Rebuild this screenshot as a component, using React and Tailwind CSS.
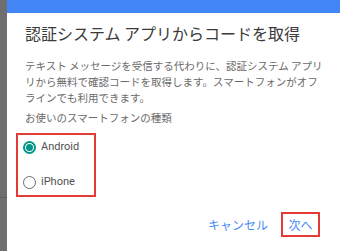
import React from "react";

const jp = { fontFamily: '"Noto Sans CJK JP", "Noto Sans", sans-serif' };

export default function App() {
  return (
    <div className="flex w-[340px] h-[251px] overflow-hidden bg-white" style={jp}>
      <div className="w-[7px] shrink-0 bg-[#6f6f6f] flex flex-col">
        <div className="h-[197px]" />
        <div className="h-px bg-[#5e5e5e]" />
      </div>
      <div className="flex-1 flex flex-col min-w-0">
        <div className="h-[13px] bg-[#4285f4] shrink-0" />
        <div className="flex flex-col pl-[18px] pr-[20px] pt-[10px]">
          <h1 className="text-[16px] leading-[20px] text-[#3a3a3a] whitespace-nowrap font-normal">
            認証システム アプリからコードを取得
          </h1>
          <p className="mt-[15px] text-[10.5px] leading-[16px] text-[#6a6a6a] whitespace-nowrap">
            テキスト メッセージを受信する代わりに、認証システム アプリ
            <br />
            リから無料で確認コードを取得します。スマートフォンがオフ
            <br />
            ラインでも利用できます。
          </p>
          <p className="mt-[4px] text-[10.5px] leading-[16px] text-[#6a6a6a] whitespace-nowrap">
            お使いのスマートフォンの種類
          </p>
          <div className="mt-[7px] -ml-[9px] w-[80px] h-[64px] border-2 border-[#e53935] flex flex-col pl-[5px]">
            <div className="flex items-center gap-[5px] mt-[6px] h-[13px]">
              <span className="w-[13px] h-[13px] rounded-full border-2 border-[#009688] flex items-center justify-center shrink-0">
                <span className="w-[7px] h-[7px] rounded-full bg-[#009688]" />
              </span>
              <span className="text-[11px] text-[#505050]" style={{ fontFamily: "Roboto, sans-serif" }}>Android</span>
            </div>
            <div className="flex items-center gap-[5px] mt-[22px] h-[13px]">
              <span className="w-[13px] h-[13px] rounded-full border-[1.5px] border-[#6b6b6b] shrink-0" />
              <span className="text-[11px] text-[#505050]" style={{ fontFamily: "Roboto, sans-serif" }}>iPhone</span>
            </div>
          </div>
          <div className="mt-[15px] flex justify-end items-center">
            <span className="text-[12px] text-[#4a8af4] mr-[13px]">キャンセル</span>
            <span className="w-[39px] h-[25px] border-2 border-[#e53935] flex items-center justify-center text-[12px] text-[#4a8af4]">
              次へ
            </span>
          </div>
        </div>
      </div>
    </div>
  );
}
